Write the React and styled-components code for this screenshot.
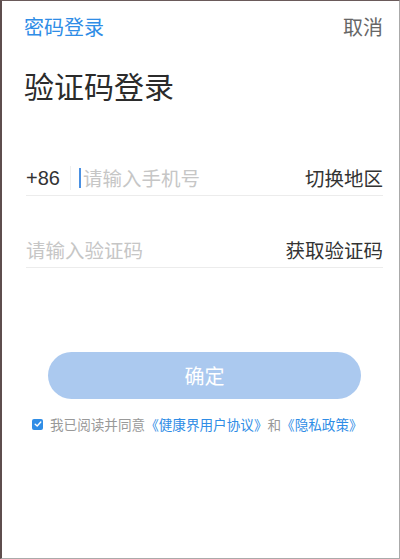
import styled, { createGlobalStyle } from 'styled-components';

const GlobalStyle = createGlobalStyle`
  html, body {
    margin: 0;
    padding: 0;
    background: #fff;
  }
  * { box-sizing: border-box; }
`;

const Page = styled.div`
  width: 400px;
  height: 559px;
  background: #fff;
  border-top: 1px solid #6a5a5a;
  border-left: 2px solid #5e4e4e;
  border-right: 1px solid #aaa;
  border-bottom: 1px solid #aaa;
  font-family: "Noto Sans CJK SC", "Noto Sans", sans-serif;
  display: flex;
  flex-direction: column;
  padding: 0 16px 0 22px;
`;

const TopBar = styled.div`
  display: flex;
  justify-content: space-between;
  align-items: center;
  height: 26px;
  margin-top: 13px;
  font-size: 20px;
`;

const TopLink = styled.span`
  color: ${p => (p.$accent ? '#2f8de6' : '#666')};
  line-height: 26px;
`;

const Title = styled.h1`
  margin: 28px 0 0;
  font-size: 30px;
  font-weight: 400;
  color: #2b2b2b;
  line-height: 34px;
`;

const Form = styled.div`
  margin-top: 58px;
  padding-left: 2px;
  display: flex;
  flex-direction: column;
  gap: 36px;
`;

const Field = styled.div`
  display: flex;
  align-items: center;
  height: 36px;
  border-bottom: 1px solid #ececec;
  font-size: 19.5px;
`;

const Prefix = styled.span`
  color: #333;
  font-family: "Liberation Sans", Arial, sans-serif;
  font-size: 20px;
  padding-right: 10px;
  border-right: 1px solid #f0f0f0;
  line-height: 24px;
`;

const Placeholder = styled.span`
  flex: 1;
  color: #c6c6c6;
  display: flex;
  align-items: center;
`;

const Caret = styled.span`
  display: inline-block;
  width: 2px;
  height: 20px;
  background: #4a90e2;
  margin: 0 2px 0 8px;
`;

const Action = styled.span`
  color: #333;
`;

const Submit = styled.button`
  margin: 84px 0 0 24px;
  width: 313px;
  height: 47px;
  border: none;
  border-radius: 24px;
  background: #abc9ef;
  color: #fff;
  font-family: inherit;
  font-size: 20px;
`;

const Agreement = styled.div`
  display: flex;
  align-items: center;
  margin: 15px 0 0 8px;
  font-size: 13.6px;
  color: #999;
  white-space: nowrap;
`;

const Check = styled.span`
  width: 11px;
  height: 11px;
  border-radius: 2px;
  background: #2f8de6;
  margin-right: 7px;
  display: inline-flex;
  align-items: center;
  justify-content: center;
`;

const Link = styled.span`
  color: #2f8de6;
`;

export default function App() {
  return (
    <>
      <GlobalStyle />
      <Page>
        <TopBar>
          <TopLink $accent>密码登录</TopLink>
          <TopLink>取消</TopLink>
        </TopBar>
        <Title>验证码登录</Title>
        <Form>
          <Field>
            <Prefix>+86</Prefix>
            <Placeholder><Caret />请输入手机号</Placeholder>
            <Action>切换地区</Action>
          </Field>
          <Field>
            <Placeholder>请输入验证码</Placeholder>
            <Action>获取验证码</Action>
          </Field>
        </Form>
        <Submit>确定</Submit>
        <Agreement>
          <Check>
            <svg width="8" height="8" viewBox="0 0 8 8">
              <path d="M1.2 4.2 L3.2 6 L6.8 2" stroke="#fff" strokeWidth="1.4" fill="none" strokeLinecap="round" strokeLinejoin="round" />
            </svg>
          </Check>
          我已阅读并同意<Link>《健康界用户协议》</Link>和<Link>《隐私政策》</Link>
        </Agreement>
      </Page>
    </>
  );
}
